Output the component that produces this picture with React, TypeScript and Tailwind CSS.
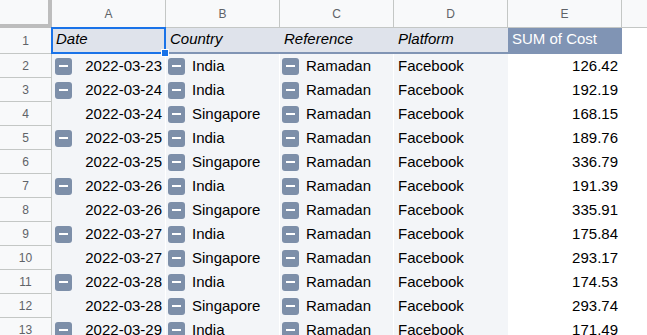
import React from "react";

type Row = { n: number; date: string; dateIcon: boolean; country: string; cost: string };

const rows: Row[] = [
  { n: 2, date: "2022-03-23", dateIcon: true, country: "India", cost: "126.42" },
  { n: 3, date: "2022-03-24", dateIcon: true, country: "India", cost: "192.19" },
  { n: 4, date: "2022-03-24", dateIcon: false, country: "Singapore", cost: "168.15" },
  { n: 5, date: "2022-03-25", dateIcon: true, country: "India", cost: "189.76" },
  { n: 6, date: "2022-03-25", dateIcon: false, country: "Singapore", cost: "336.79" },
  { n: 7, date: "2022-03-26", dateIcon: true, country: "India", cost: "191.39" },
  { n: 8, date: "2022-03-26", dateIcon: false, country: "Singapore", cost: "335.91" },
  { n: 9, date: "2022-03-27", dateIcon: true, country: "India", cost: "175.84" },
  { n: 10, date: "2022-03-27", dateIcon: false, country: "Singapore", cost: "293.17" },
  { n: 11, date: "2022-03-28", dateIcon: true, country: "India", cost: "174.53" },
  { n: 12, date: "2022-03-28", dateIcon: false, country: "Singapore", cost: "293.74" },
  { n: 13, date: "2022-03-29", dateIcon: true, country: "India", cost: "171.49" },
];

const letters = ["A", "B", "C", "D", "E"];

function Minus() {
  return (
    <span className="w-[17px] h-[17px] shrink-0 rounded-[3px] bg-[#7d8fa9] flex items-center justify-center">
      <span className="w-[9px] h-[2px] bg-white" />
    </span>
  );
}

function RowNum({ n, tall }: { n: number; tall?: boolean }) {
  return (
    <div
      className={`w-[52px] shrink-0 ${tall ? "h-[26px]" : "h-[24px]"} bg-[#f8f9fa] border-r border-b border-[#c4c7c5] flex items-center justify-center text-[12px] text-[#5f6368]`}
    >
      {n}
    </div>
  );
}

export default function App() {
  return (
    <div
      className="relative w-[647px] h-[335px] overflow-hidden bg-white text-[15px] text-black"
      style={{ fontFamily: '"Liberation Sans", Arial, sans-serif' }}
    >
      {/* Column headers */}
      <div className="flex h-[28px]">
        <div className="w-[52px] shrink-0 bg-[#f8f9fa] border-r-4 border-b-4 border-[#bdbdbd]" />
        {letters.map((l) => (
          <div
            key={l}
            className="w-[114px] shrink-0 bg-[#f8f9fa] border-r border-b border-[#c4c7c5] flex items-center justify-center text-[12px] text-[#5f6368]"
          >
            {l}
          </div>
        ))}
        <div className="flex-1 bg-[#f8f9fa] border-b border-[#c4c7c5]" />
      </div>

      {/* Pivot header row */}
      <div className="flex h-[26px]">
        <RowNum n={1} tall />
        {["Date", "Country", "Reference", "Platform"].map((h) => (
          <div
            key={h}
            className="w-[114px] shrink-0 bg-[#dfe3eb] border-b-2 border-[#8094b4] px-[4px] pb-[1px] flex items-center italic"
          >
            {h}
          </div>
        ))}
        <div className="w-[114px] shrink-0 bg-[#8094b4] px-[4px] pb-[3px] flex items-center text-white">SUM of Cost</div>
        <div className="flex-1" />
      </div>

      {/* Body */}
      {rows.map((r) => (
        <div key={r.n} className="flex h-[24px]">
          <RowNum n={r.n} />
          <div className="w-[114px] shrink-0 bg-[#f3f5f8] border-r border-white flex items-center pl-[3px] pr-[3px]">
            {r.dateIcon && <Minus />}
            <span className="ml-auto">{r.date}</span>
          </div>
          <div className="w-[114px] shrink-0 bg-[#f3f5f8] border-r border-white flex items-center gap-[7px] pl-[2px]">
            <Minus />
            <span>{r.country}</span>
          </div>
          <div className="w-[114px] shrink-0 bg-[#f3f5f8] border-r border-white flex items-center gap-[7px] pl-[2px]">
            <Minus />
            <span>Ramadan</span>
          </div>
          <div className="w-[114px] shrink-0 bg-[#f3f5f8] flex items-center pl-[4px]">Facebook</div>
          <div className="w-[114px] shrink-0 flex items-center justify-end pr-[4px]">{r.cost}</div>
          <div className="flex-1" />
        </div>
      ))}

      {/* Selection on A1 */}
      <div className="absolute left-[51px] top-[27px] w-[115px] h-[27px] border-2 border-[#1a73e8] pointer-events-none" />
      <div className="absolute left-[161px] top-[49px] w-[8px] h-[8px] bg-[#1a73e8] border border-white" />
    </div>
  );
}
